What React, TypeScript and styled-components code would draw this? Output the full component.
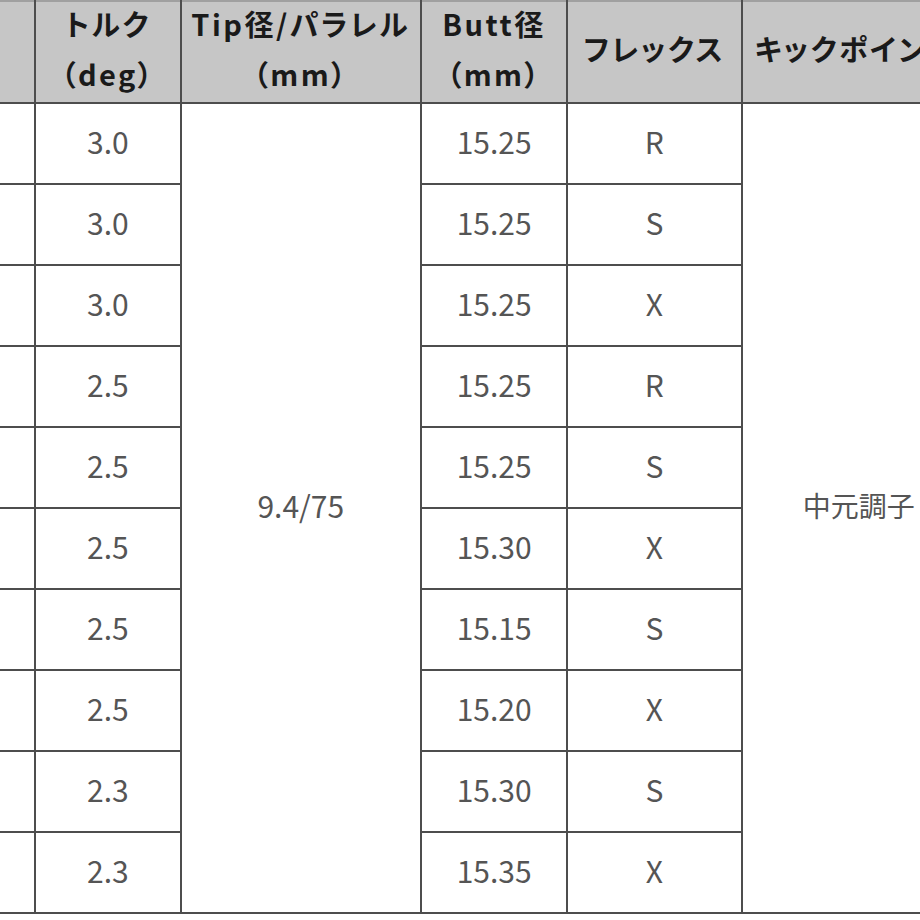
import styled, {createGlobalStyle} from "styled-components";

const GlobalStyle = createGlobalStyle`
    html, body {
        margin: 0;
        padding: 0;
        background: #ffffff;
    }
    #root {
        width: 920px;
        height: 920px;
        overflow: hidden;
    }
`

type ShaftRow = {
    torque: string,
    butt: string,
    flex: string,
}

const rows: Array<ShaftRow> = [
    {torque: "3.0", butt: "15.25", flex: "R"},
    {torque: "3.0", butt: "15.25", flex: "S"},
    {torque: "3.0", butt: "15.25", flex: "X"},
    {torque: "2.5", butt: "15.25", flex: "R"},
    {torque: "2.5", butt: "15.25", flex: "S"},
    {torque: "2.5", butt: "15.30", flex: "X"},
    {torque: "2.5", butt: "15.15", flex: "S"},
    {torque: "2.5", butt: "15.20", flex: "X"},
    {torque: "2.3", butt: "15.30", flex: "S"},
    {torque: "2.3", butt: "15.35", flex: "X"},
]

const colWidths = [150, 145, 240, 146, 174, 234]

export default function App() {
    return (
        <>
            <GlobalStyle/>
            <StyledTable>
                <colgroup>
                    {colWidths.map((w, i) => <col key={i} style={{width: w}}/>)}
                </colgroup>
                <thead>
                <HeadRow>
                    <HeadCell></HeadCell>
                    <HeadCell><HeadLabel>トルク<br/>（deg）</HeadLabel></HeadCell>
                    <HeadCell><HeadLabel>Tip径/パラレル<br/>（mm）</HeadLabel></HeadCell>
                    <HeadCell><HeadLabel>Butt径<br/>（mm）</HeadLabel></HeadCell>
                    <HeadCell><HeadLabel>フレックス</HeadLabel></HeadCell>
                    <HeadCell $align="left"><HeadLabel>キックポイント</HeadLabel></HeadCell>
                </HeadRow>
                </thead>
                <tbody>
                {rows.map((row, i) => (
                    <BodyRow key={i}>
                        <Cell></Cell>
                        <Cell>{row.torque}</Cell>
                        {i === 0 && <Cell rowSpan={rows.length}>9.4/75</Cell>}
                        <Cell>{row.butt}</Cell>
                        <Cell>{row.flex}</Cell>
                        {i === 0 && <Cell rowSpan={rows.length} $narrow>中元調子</Cell>}
                    </BodyRow>
                ))}
                </tbody>
            </StyledTable>
        </>
    );
}

const StyledTable = styled.table`
    table-layout: fixed;
    border-collapse: collapse;
    width: 1093px;
    margin-left: -116px;
    margin-top: 0;
    font-family: "Noto Sans CJK JP", "Noto Sans", sans-serif;
`

const HeadRow = styled.tr`
    height: 101px;
    background: #c6c6c6;
`

const HeadCell = styled.th<{ $align?: string }>`
    border: 2px solid #4d4d4d;
    border-top-color: #a0a0a0;
    padding: 0 0 0 ${props => props.$align === "left" ? "12px" : "0"};
    font-size: 29px;
    font-weight: 700;
    color: #1a1a1a;
    text-align: ${props => props.$align ?? "center"};
    white-space: nowrap;
    overflow: hidden;
    font-feature-settings: "palt";
    letter-spacing: 2.5px;
`

const HeadLabel = styled.span`
    display: block;
    line-height: 50px;
    margin: -4px 0 4px;
`

const BodyRow = styled.tr`
    height: 81px;
`

const Cell = styled.td<{ $narrow?: boolean }>`
    border: 2px solid #4d4d4d;
    padding: 0 0 6px 0;
    font-size: ${props => props.$narrow ? "28px" : "30px"};
    font-weight: 400;
    color: #555555;
    text-align: center;
    vertical-align: middle;
    white-space: nowrap;
`
